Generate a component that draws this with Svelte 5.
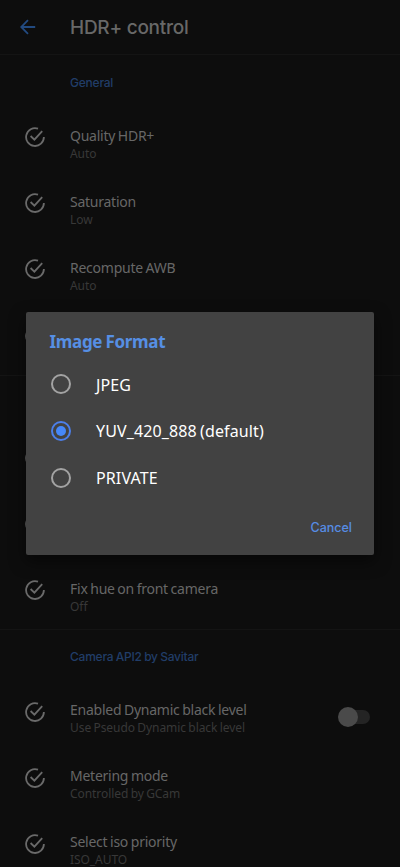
<script lang="ts">
  type Item = {
    title?: string;
    value?: string;
    toggle?: boolean;
  };
  type Section = {
    label?: string;
    items: Item[];
  };

  const sections: Section[] = [
    {
      label: 'General',
      items: [
        { title: 'Quality HDR+', value: 'Auto' },
        { title: 'Saturation', value: 'Low' },
        { title: 'Recompute AWB', value: 'Auto' },
        {}
      ]
    },
    {
      items: [{}, {}, { title: 'Fix hue on front camera', value: 'Off' }]
    },
    {
      label: 'Camera API2 by Savitar',
      items: [
        { title: 'Enabled Dynamic black level', value: 'Use Pseudo Dynamic black level', toggle: true },
        { title: 'Metering mode', value: 'Controlled by GCam' },
        { title: 'Select iso priority', value: 'ISO_AUTO' }
      ]
    }
  ];

  const formats = ['JPEG', 'YUV_420_888 (default)', 'PRIVATE'];
  let selected = $state('YUV_420_888 (default)');
  let open = $state(true);
</script>

<div class="screen">
  <header>
    <svg class="back" viewBox="0 0 16 16">
      <path d="M15.2 8H1.6M8 1.2L1.2 8L8 14.8" />
    </svg>
    <h1>HDR+ control</h1>
  </header>

  {#each sections as section}
    <section>
      <h2>{section.label ?? ''}</h2>
      {#each section.items as item}
        <div class="row">
          <svg class="check" viewBox="0 0 20 20">
            <path d="M13 1.7A8.9 8.9 0 1 0 18.9 10" />
            <path d="M5.6 9L9.4 12.7L17.2 4.2" />
          </svg>
          <div class="text">
            {#if item.title}
              <div class="title">{item.title}</div>
              <div class="value">{item.value}</div>
            {/if}
          </div>
          {#if item.toggle}
            <span class="switch"><span class="thumb"></span></span>
          {/if}
        </div>
      {/each}
    </section>
  {/each}

  {#if open}
    <div class="overlay">
      <div class="dialog" role="dialog" aria-label="Image Format">
        <h3>Image Format</h3>
        {#each formats as format}
          <button class="option" onclick={() => (selected = format)}>
            <span class="radio" class:on={selected === format}></span>
            <span class="name">{format}</span>
          </button>
        {/each}
        <div class="actions">
          <button class="cancel" onclick={() => (open = false)}>Cancel</button>
        </div>
      </div>
    </div>
  {/if}
</div>

<style>
:global(body) { background: #0d0d0d; }
.screen {
  position: relative;
  width: 400px;
  height: 867px;
  overflow: hidden;
  background: #0d0d0d;
  font-family: "Noto Sans", sans-serif;
}
h1, h2, h3 { margin: 0; }
header {
  display: flex;
  align-items: center;
  height: 54px;
  padding-left: 20px;
}
.back {
  width: 16px;
  height: 16px;
  margin-right: 34px;
  fill: none;
  stroke: #224a80;
  stroke-width: 1.8;
}
h1 {
  padding-top: 2px;
  font-family: Inter, sans-serif;
  font-size: 19px;
  font-weight: 500;
  line-height: 24px;
  letter-spacing: -0.25px;
  color: #686868;
}
section { border-top: 1px solid #141414; }
h2 {
  box-sizing: border-box;
  height: 55.3px;
  padding: 19px 0 0 70px;
  font-family: Inter, sans-serif;
  font-size: 12px;
  font-weight: 500;
  line-height: 17px;
  letter-spacing: -0.22px;
  word-spacing: -0.6px;
  color: #213d68;
}
section:last-child h2, section:nth-of-type(3) h2 {
  height: 54.5px;
  padding-top: 18px;
}
.row {
  display: flex;
  box-sizing: border-box;
  height: 66.1px;
  padding: 0 30px 0 25px;
}
.check {
  flex: none;
  width: 20px;
  height: 20px;
  margin: 17px 25px 0 0;
  fill: none;
  stroke: #6a6a6a;
  stroke-width: 1.8;
}
.text {
  flex: 1;
  padding-top: 16.4px;
  white-space: nowrap;
}
.title {
  font-size: 14px;
  line-height: 18px;
  letter-spacing: -0.25px;
  word-spacing: -0.7px;
  color: #676767;
}
.value {
  font-size: 12px;
  line-height: 17px;
  letter-spacing: -0.06px;
  word-spacing: -0.7px;
  color: #383838;
}
.switch {
  align-self: flex-start;
  width: 30px;
  height: 14px;
  margin-top: 25px;
  border-radius: 7px;
  background: #242424;
}
.thumb {
  display: block;
  width: 20px;
  height: 20px;
  margin: -3px 0 0 -2px;
  border-radius: 50%;
  background: #4a4a4a;
}
.overlay {
  position: absolute;
  inset: 0;
  display: flex;
  align-items: center;
  justify-content: center;
}
.dialog {
  box-sizing: border-box;
  width: 348px;
  height: 243px;
  padding: 18px 22px 0 23.5px;
  border-radius: 2px;
  background: #424242;
  box-shadow: 0 6px 16px #0008;
}
h3 {
  margin-bottom: 7px;
  font-size: 17px;
  font-weight: 700;
  line-height: 24px;
  letter-spacing: -0.32px;
  word-spacing: -0.8px;
  color: #568fe4;
}
.option {
  display: flex;
  align-items: center;
  height: 46.7px;
  padding: 0 0 0 1px;
  border: 0;
  background: none;
  font-family: inherit;
  font-size: 16px;
  color: #fff;
  white-space: nowrap;
}
.name {
  padding-top: 0.5px;
  letter-spacing: 0.12px;
  word-spacing: -1px;
}
.radio {
  display: flex;
  align-items: center;
  justify-content: center;
  box-sizing: border-box;
  width: 20px;
  height: 20px;
  margin-right: 25.5px;
  border: 2px solid #a3a3a3;
  border-radius: 50%;
}
.radio.on { border-color: #4c7fea; }
.radio.on::after {
  content: '';
  width: 10px;
  height: 10px;
  border-radius: 50%;
  background: #4688fa;
}
.actions {
  display: flex;
  justify-content: flex-end;
  padding-top: 18.4px;
}
.cancel {
  padding: 0;
  border: 0;
  background: none;
  font-family: Inter, sans-serif;
  font-size: 12.5px;
  font-weight: 500;
  line-height: 18px;
  color: #568ce4;
}
</style>
